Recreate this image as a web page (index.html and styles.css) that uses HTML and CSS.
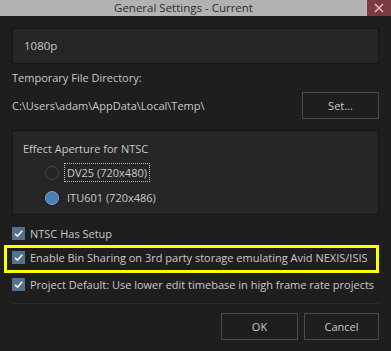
FILE: index.html
```html
<!DOCTYPE html>
<html>
<head>
  <title>General Settings - Current</title>
  <link rel="stylesheet" href="styles.css">
</head>
<body>
  <div class="dialog">
    <div class="titlebar">
      <div class="title">General Settings - Current</div>
      <div class="close">
        <svg width="12" height="12" viewBox="0 0 12 12"><path d="M2 2 L10 10 M10 2 L2 10" stroke="#e9b9bd" stroke-width="1.6" fill="none"/></svg>
      </div>
    </div>

    <div class="content">
      <div class="format-box">1080p</div>

      <div class="label temp-label">Temporary File Directory:</div>
      <div class="path-row">
        <span class="path">C:\Users\adam\AppData\Local\Temp\</span>
        <button class="btn set-btn">Set...</button>
      </div>

      <div class="group">
        <div class="group-title">Effect Aperture for NTSC</div>
        <div class="radio-list">
          <div class="radio-row">
            <span class="radio"></span>
            <span class="radio-text focused">DV25 (720x480)</span>
          </div>
          <div class="radio-row">
            <span class="radio checked"></span>
            <span class="radio-text">ITU601 (720x486)</span>
          </div>
        </div>
      </div>

      <div class="check-row first">
        <span class="check"><svg width="13" height="13" viewBox="0 0 13 13"><path d="M3 6.8 L5.5 9.2 L10.2 3.8" stroke="#fff" stroke-width="1.5" fill="none"/></svg></span>
        <span>NTSC Has Setup</span>
      </div>
      <div class="highlight">
        <div class="check-row">
          <span class="check"><svg width="13" height="13" viewBox="0 0 13 13"><path d="M3 6.8 L5.5 9.2 L10.2 3.8" stroke="#fff" stroke-width="1.5" fill="none"/></svg></span>
          <span>Enable Bin Sharing on 3rd party storage emulating Avid NEXIS/ISIS</span>
        </div>
      </div>
      <div class="check-row last">
        <span class="check"><svg width="13" height="13" viewBox="0 0 13 13"><path d="M3 6.8 L5.5 9.2 L10.2 3.8" stroke="#fff" stroke-width="1.5" fill="none"/></svg></span>
        <span>Project Default: Use lower edit timebase in high frame rate projects</span>
      </div>

      <div class="separator"></div>

      <div class="footer">
        <button class="btn ok-btn">OK</button>
        <button class="btn cancel-btn">Cancel</button>
      </div>
    </div>
  </div>
</body>
</html>
```

FILE: styles.css
```css
:root {
  --bg-color: #1e1e1e;
  --panel-color: #262626;
  --text-color: #c9c9c9;
  --border-color: #141414;
  --button-border: #4a4a4a;
}

body {
  margin: 0;
  background-color: var(--bg-color);
  font-family: 'Open Sans', 'Noto Sans', sans-serif;
  font-size: 11px;
  color: var(--text-color);
}

.dialog {
  width: 391px;
  height: 351px;
  overflow: hidden;
  white-space: nowrap;
}

.titlebar {
  height: 16px;
  display: flex;
  background: #b2b2b2;
}

.title {
  flex: 1;
  text-align: center;
  color: #2e2e2e;
  font-size: 11.5px;
  line-height: 16px;
}

.close {
  width: 24px;
  height: 16px;
  background: #7b3a40;
  display: flex;
  align-items: center;
  justify-content: center;
}

.content {
  padding: 0 12px;
  display: flex;
  flex-direction: column;
}

.format-box {
  margin-top: 12px;
  height: 34px;
  line-height: 34px;
  padding-left: 11px;
  font-size: 11.5px;
  background: var(--panel-color);
  border: 1px solid var(--border-color);
}

.label {
  line-height: 16px;
}

.temp-label {
  margin-top: 6px;
}

.path-row {
  margin-top: 6px;
  display: flex;
  align-items: center;
  justify-content: space-between;
}

.btn {
  background: transparent;
  border: 1px solid var(--button-border);
  color: var(--text-color);
  font-family: inherit;
  font-size: 11px;
  padding: 0;
  border-radius: 0;
}

.set-btn {
  width: 77px;
  height: 27px;
}

.group {
  margin-top: 11px;
  height: 85px;
  box-sizing: border-box;
  padding: 10px 10px 0;
  background: var(--panel-color);
  border: 1px solid var(--border-color);
}

.group-title {
  line-height: 16px;
}

.radio-list {
  margin-top: 3px;
  padding-left: 22px;
}

.radio-row {
  height: 25px;
  display: flex;
  align-items: center;
}

.radio {
  flex: none;
  box-sizing: border-box;
  width: 14px;
  height: 14px;
  border-radius: 50%;
  border: 1px solid #474747;
  background: #242424;
  margin-right: 5px;
}

.radio.checked {
  background: #4a7fb8;
  border-color: #7a9fc6;
}

.radio-text {
  padding: 1px 2px;
  border: 1px solid transparent;
}

.radio-text.focused {
  border: 1px dotted #bdbdbd;
}

.check-row {
  display: flex;
  align-items: center;
  height: 24px;
}

.check-row.first {
  margin-top: 6px;
}

.check {
  flex: none;
  width: 13px;
  height: 13px;
  background: #56708e;
  margin-right: 5px;
  display: flex;
}

.highlight {
  margin-left: -8px;
  padding: 0 0 3px 5px;
  border: 3px solid #ffff00;
  height: 28px;
  box-sizing: border-box;
}

.highlight .check-row {
  height: 19px;
}

.check-row.last {
  height: 22px;
}

.separator {
  margin-top: 8px;
  height: 1px;
  background: #2c2c2c;
}

.footer {
  margin-top: 9px;
  display: flex;
  justify-content: flex-end;
  gap: 6px;
}

.ok-btn {
  width: 77px;
  height: 27px;
}

.cancel-btn {
  width: 75px;
  height: 27px;
}
```
